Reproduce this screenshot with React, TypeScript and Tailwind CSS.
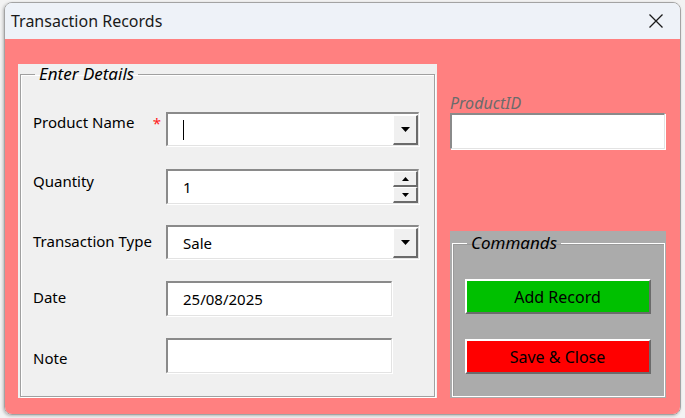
import React from 'react';

const font = { fontFamily: '"Noto Sans", "Liberation Sans", sans-serif' };

const sunken =
  'relative bg-white border-t-2 border-l-2 border-t-[#8a8a8a] border-l-[#8a8a8a] border-r border-b border-r-[#e3e3e3] border-b-[#e3e3e3] shadow-[1px_1px_0_#ffffff]';

const raised =
  'flex items-center justify-center bg-[#f0f0f0] border-t border-l border-t-white border-l-white border-r-2 border-b-2 border-r-[#6b6b6b] border-b-[#6b6b6b]';

const Arrow = ({ up = false, small = false }: { up?: boolean; small?: boolean }) => {
  const w = small ? 7 : 9;
  const h = small ? 4 : 5;
  return (
    <svg width={w} height={h} viewBox={`0 0 ${w} ${h}`}>
      <path d={up ? `M0 ${h} L${w / 2} 0 L${w} ${h} Z` : `M0 0 L${w} 0 L${w / 2} ${h} Z`} fill="#000" />
    </svg>
  );
};

const Label = ({ children, mt }: { children: React.ReactNode; mt: string }) => (
  <div className={`w-[133px] shrink-0 text-[15px] leading-[18px] text-black ${mt}`}>{children}</div>
);

const ComboBox = ({ value, cursor = false }: { value?: string; cursor?: boolean }) => (
  <div className={`${sunken} w-[253px] h-[34px] flex`}>
    <div className="flex-1 flex items-center pl-[15px] text-[15px] leading-[18px] text-black">
      {cursor && <span className="w-px h-[20px] bg-black" />}
      {value}
    </div>
    <div className={`${raised} w-[25px] h-[30px] mt-px`}>
      <Arrow />
    </div>
  </div>
);

export default function App() {
  return (
    <div className="w-[685px] h-[418px] bg-[#f3f3f3] overflow-hidden" style={font}>
      <div className="ml-[4px] mt-[2px] w-[677px] h-[413px] border border-[#a3a3a3] rounded-[8px] overflow-hidden flex flex-col shadow-[-1px_1px_3px_rgba(0,0,0,0.25)]">
        {/* title bar */}
        <div className="h-[36px] shrink-0 bg-[#eef2f8] flex items-center justify-between pl-[6px] pr-[17px]">
          <span className="text-[16px] leading-[20px] text-[#1a1a1a]">Transaction Records</span>
          <svg width="14" height="14" viewBox="0 0 14 14">
            <path d="M0.5 0.5 L13.5 13.5 M13.5 0.5 L0.5 13.5" stroke="#1a1a1a" strokeWidth="1.3" />
          </svg>
        </div>

        {/* body */}
        <div className="flex-1 bg-[#ff8080] flex pl-[13px] pt-[25px]">
          {/* Enter Details frame */}
          <div className="w-[419px] h-[334px] bg-[#f0f0f0] px-[2px] pb-[1px]">
            <fieldset className="h-full border border-[#a0a0a0] shadow-[1px_1px_0_#ffffff,inset_1px_1px_0_#ffffff] pl-[12px]">
              <legend className="ml-[2px] px-[4px] text-[17px] leading-[20px] italic text-black">Enter Details</legend>

              <div className="flex mt-[28px]">
                <Label mt="mt-[1px]">
                  <div className="flex justify-between">
                    <span>Product Name</span>
                    <span className="text-[#ff2020] pr-[5px] mt-[1px]">*</span>
                  </div>
                </Label>
                <ComboBox cursor />
              </div>

              <div className="flex mt-[23px]">
                <Label mt="mt-[3px]">Quantity</Label>
                <div className={`${sunken} w-[253px] h-[35px] flex`}>
                  <div className="flex-1 flex items-center pl-[15px] text-[15px] leading-[18px] text-black">1</div>
                  <div className="flex flex-col w-[25px]">
                    <div className={`${raised} h-[16px]`}>
                      <Arrow up small />
                    </div>
                    <div className={`${raised} h-[16px]`}>
                      <Arrow small />
                    </div>
                  </div>
                </div>
              </div>

              <div className="flex mt-[21px]">
                <Label mt="mt-[7px]">Transaction Type</Label>
                <ComboBox value="Sale" />
              </div>

              <div className="flex mt-[22px]">
                <Label mt="mt-[7px]">Date</Label>
                <div className={`${sunken} w-[226px] h-[35px] flex items-center pl-[15px] text-[15px] leading-[18px] text-black`}>
                  25/08/2025
                </div>
              </div>

              <div className="flex mt-[22px]">
                <Label mt="mt-[11px]">Note</Label>
                <div className={`${sunken} w-[226px] h-[35px]`} />
              </div>
            </fieldset>
          </div>

          {/* right column */}
          <div className="ml-[13px] w-[216px] flex flex-col">
            <div className="mt-[30px] text-[16px] leading-[19px] italic text-[#6b6b6b]">ProductID</div>
            <div className={`${sunken} w-[215px] h-[36px]`} />

            <div className="mt-[82px] h-[167px] bg-[#ababab] pt-[2px] pl-[2px] pr-[1px] pb-[1px]">
              <fieldset className="h-full border border-white shadow-[inset_1px_1px_0_#9a9a9a] flex flex-col items-center">
                <legend className="ml-[14px] px-[4px] text-[17px] leading-[20px] italic text-black">Commands</legend>
                <button className="mt-[26px] -ml-[2px] w-[186px] h-[35px] bg-[#00c000] border-t-2 border-l-2 border-t-white border-l-white border-r-2 border-b-2 border-r-[#6b6b6b] border-b-[#6b6b6b] text-[16px] leading-[18px] text-black">
                  Add Record
                </button>
                <button className="mt-[25px] -ml-[2px] w-[186px] h-[35px] bg-[#ff0000] border-t-2 border-l-2 border-t-white border-l-white border-r-2 border-b-2 border-r-[#6b6b6b] border-b-[#6b6b6b] text-[16px] leading-[18px] text-black">
                  Save &amp; Close
                </button>
              </fieldset>
            </div>
          </div>
        </div>
      </div>
    </div>
  );
}
